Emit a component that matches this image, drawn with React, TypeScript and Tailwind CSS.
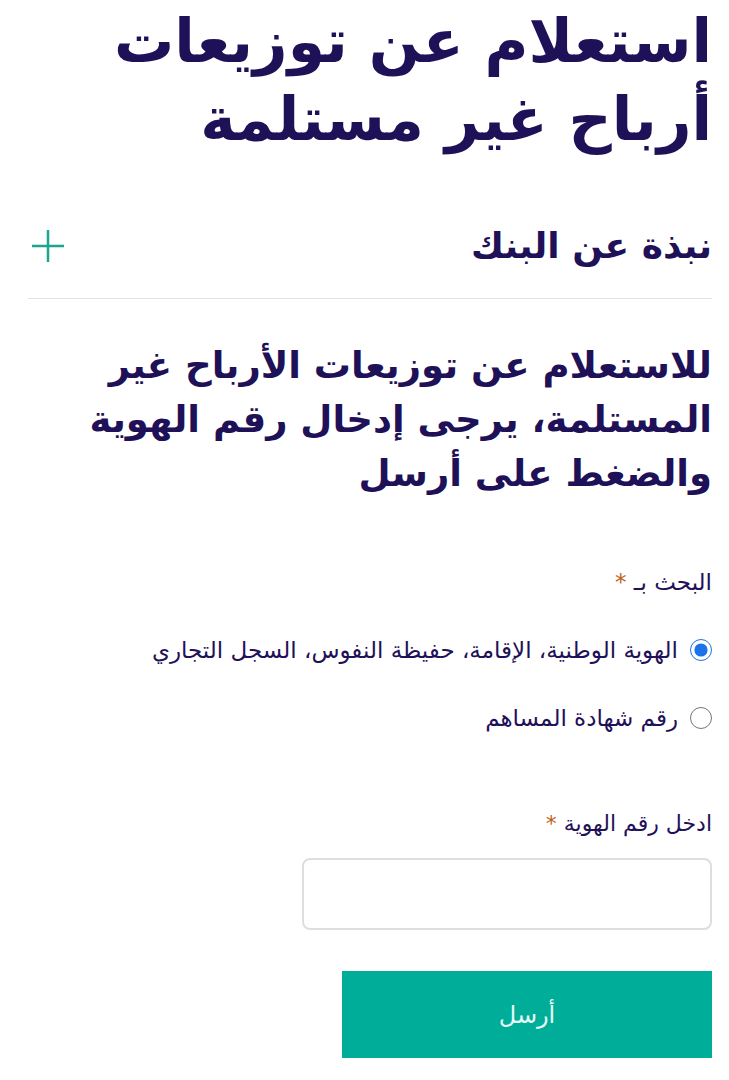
import React, { useState } from 'react';

function App() {
  const [searchBy, setSearchBy] = useState('id');

  return (
    <div
      dir="rtl"
      className="min-h-screen w-[729px] bg-white pr-[17px] pl-[28px] text-[#1f1158]"
      style={{ fontFamily: '"DejaVu Sans", "Noto Sans", sans-serif' }}
    >
      <h1 className="pt-[2px] text-[60px] font-bold leading-[78px]">استعلام عن توزيعات أرباح غير مستلمة</h1>

      {/* about the bank accordion */}
      <div className="mt-[66px] flex items-center justify-between border-b border-[#e3e3e3] pb-[30px]">
        <h2 className="text-[36px] font-bold leading-[44px]">نبذة عن البنك</h2>
        <svg width="36" height="36" viewBox="0 0 36 36" className="ml-[2px]">
          <path d="M18 2v32M2 18h32" stroke="#1aa58f" strokeWidth="2.5" />
        </svg>
      </div>

      <p className="mt-[40px] text-[37px] font-bold leading-[54px]">
        للاستعلام عن توزيعات الأرباح غير المستلمة، يرجى إدخال رقم الهوية والضغط على أرسل
      </p>

      <div className="mt-[65px] text-[23px] leading-[32px]">
        البحث بـ <span className="text-[#c0611c]">*</span>
      </div>

      <div className="mt-[37px] flex flex-col gap-[38px]">
        <label className="flex items-center gap-[12px] text-[23px] leading-[30px]">
          <input
            type="radio"
            name="searchBy"
            checked={searchBy === 'id'}
            onChange={() => setSearchBy('id')}
            className="h-[22px] w-[22px] accent-[#1a73e8]"
          />
          الهوية الوطنية، الإقامة، حفيظة النفوس، السجل التجاري
        </label>
        <label className="flex items-center gap-[12px] text-[23px] leading-[30px]">
          <input
            type="radio"
            name="searchBy"
            checked={searchBy === 'cert'}
            onChange={() => setSearchBy('cert')}
            className="h-[22px] w-[22px] accent-[#1a73e8]"
          />
          رقم شهادة المساهم
        </label>
      </div>

      <div className="mt-[76px] text-[22px] leading-[30px]">
        ادخل رقم الهوية <span className="text-[#c0611c]">*</span>
      </div>

      <input
        type="text"
        className="mt-[19px] block h-[72px] w-[410px] rounded-[8px] border-2 border-[#dedede] px-4 text-[20px] outline-none"
      />

      <button className="mt-[41px] flex h-[87px] w-[370px] items-center justify-center bg-[#00ad98] text-[24px] text-[#e6fbf7]">
        أرسل
      </button>
    </div>
  );
}

export default App;
